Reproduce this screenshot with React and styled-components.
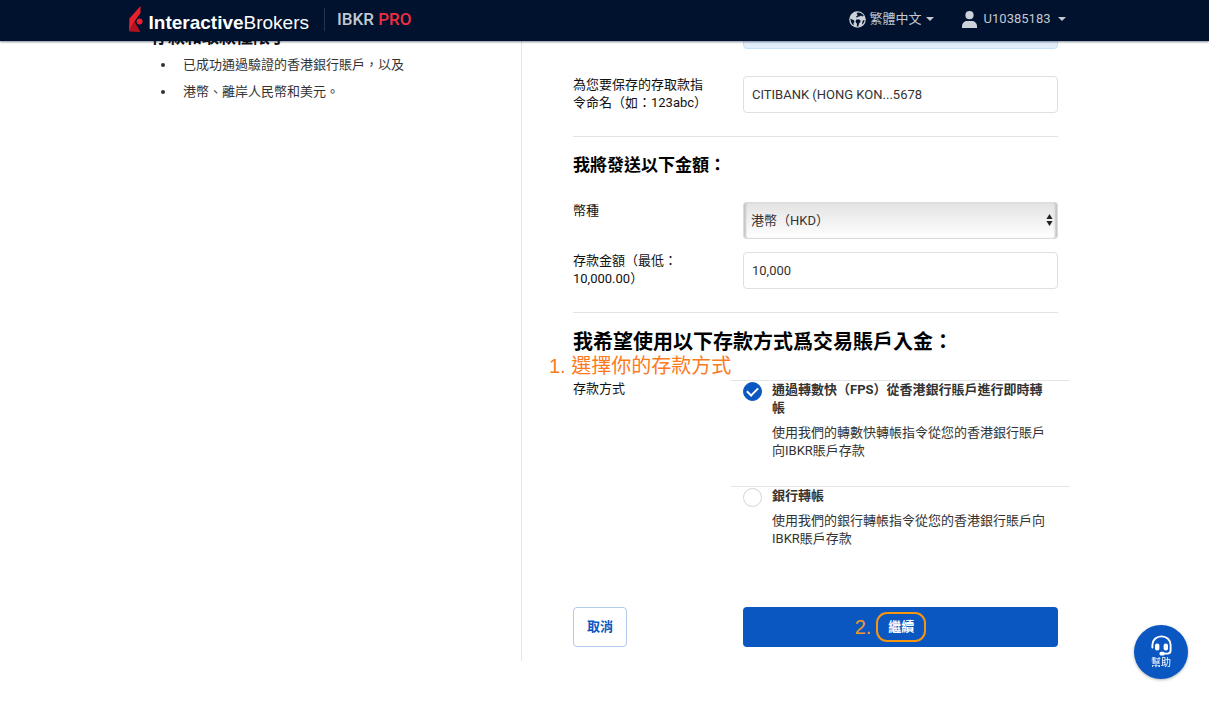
import React, { useState } from "react";
import styled, { createGlobalStyle } from "styled-components";

const depositMethods = [
  {
    id: "fps",
    title: "通過轉數快（FPS）從香港銀行賬戶進行即時轉帳",
    text: "使用我們的轉數快轉帳指令從您的香港銀行賬戶向IBKR賬戶存款",
  },
  {
    id: "bank",
    title: "銀行轉帳",
    text: "使用我們的銀行轉帳指令從您的香港銀行賬戶向IBKR賬戶存款",
  },
];

const Logo = () => (
  <svg width="14" height="26" viewBox="0 0 14 26" aria-hidden="true">
    <path d="M11.5 0 L0.4 12.6 L0 25.5 L5.4 15.6 L11.5 7 Z" fill="#e8202c" />
    <path d="M0 25.5 L5.4 15.2 L11.4 26 Z" fill="#b3121d" />
    <circle cx="10.6" cy="15.6" r="3" fill="#e8202c" />
  </svg>
);

const Globe = () => (
  <svg width="17" height="17" viewBox="0 0 17 17" aria-hidden="true">
    <circle cx="8.5" cy="8.5" r="8.3" fill="#cdd2da" />
    <path d="M8.6 1.4 C11.4 1.3 13.6 2.7 14.8 4.8 L13.4 5.6 L12 4.4 L10.8 5.6 L9.2 5.4 L8 6.8 L7 5.4 L8.8 4.2 L7.6 2.8 Z" fill="#00122d" />
    <path d="M1.5 7.6 L3 8.6 L5 9.2 L5.4 11 L4.4 12.6 L4.8 14.6 C2.6 13 1.4 10.6 1.5 7.6 Z" fill="#00122d" />
    <path d="M7 8.8 L9.6 8.2 L11.6 9.4 L11.4 11 L10 12.4 L9.4 15.4 L7.8 15.4 L8 12.8 L6.6 11 Z" fill="#00122d" />
    <path d="M15.5 9 L13.8 9.6 L12.8 13.6 C14.4 12.6 15.4 11 15.5 9 Z" fill="#00122d" />
  </svg>
);

const Person = () => (
  <svg width="15" height="17" viewBox="0 0 15 17" aria-hidden="true">
    <circle cx="7.5" cy="4.2" r="4.1" fill="#cdd2da" />
    <path d="M0 17 V15.4 C0 12 2.6 10 5.2 10 H9.8 C12.4 10 15 12 15 15.4 V17 Z" fill="#cdd2da" />
  </svg>
);

const Headset = () => (
  <svg width="21" height="21" viewBox="0 0 21 21" fill="none" aria-hidden="true">
    <path d="M1.4 12.5 V10 C1.4 4.8 5.4 1.4 10.5 1.4 C15.6 1.4 19.6 4.8 19.6 10 V15.5 C19.6 17.5 18.4 18.6 16.4 18.6 H11" stroke="#fff" strokeWidth="1.9" strokeLinecap="round" />
    <rect x="4" y="8.4" width="4.4" height="7" rx="2" fill="#fff" />
    <rect x="12.6" y="8.4" width="4.4" height="7" rx="2" fill="#fff" />
    <rect x="8.4" y="16.8" width="5.4" height="3.8" rx="1.9" fill="#fff" />
  </svg>
);

const App = () => {
  const [name, setName] = useState("CITIBANK (HONG KON...5678");
  const [amount, setAmount] = useState("10,000");
  const [method, setMethod] = useState("fps");

  return (
    <>
      <GlobalStyle />
      <Header>
        <HeaderInner>
          <Brand href="#">
            <Logo />
            <BrandName>
              <b>Interactive</b>Brokers
            </BrandName>
          </Brand>
          <Plan>
            IBKR <span>PRO</span>
          </Plan>
          <Menu>
            <MenuButton type="button">
              <Globe />
              繁體中文
              <Caret />
            </MenuButton>
            <MenuButton type="button" $wide>
              <Person />
              U10385183
              <Caret />
            </MenuButton>
          </Menu>
        </HeaderInner>
      </Header>

      <Page>
        <Aside>
          <AsideTitle>存款和取款僅限于</AsideTitle>
          <List>
            <li>已成功通過驗證的香港銀行賬戶，以及</li>
            <li>港幣、離岸人民幣和美元。</li>
          </List>
        </Aside>

        <Form onSubmit={(e) => e.preventDefault()}>
          <Row>
            <Notice />
          </Row>
          <Row>
            <Label htmlFor="name">為您要保存的存取款指令命名（如：123abc）</Label>
            <Input id="name" value={name} onChange={(e) => setName(e.target.value)} />
          </Row>
          <Rule />
          <Heading>我將發送以下金額：</Heading>
          <Fields>
            <Row>
              <Label htmlFor="currency">幣種</Label>
              <SelectWrap>
                <Select id="currency" defaultValue="HKD">
                  <option value="HKD">港幣（HKD）</option>
                  <option value="USD">美元（USD）</option>
                </Select>
                <svg width="7" height="12" viewBox="0 0 7 12" aria-hidden="true">
                  <path d="M3.5 0 L6.6 5 H0.4 Z M3.5 12 L6.6 7 H0.4 Z" fill="#222" />
                </svg>
              </SelectWrap>
            </Row>
            <Row>
              <Label htmlFor="amount">存款金額（最低：10,000.00）</Label>
              <Input id="amount" value={amount} onChange={(e) => setAmount(e.target.value)} />
            </Row>
          </Fields>
          <Rule />
          <Heading $large>我希望使用以下存款方式爲交易賬戶入金：</Heading>
          <StepNote>1. 選擇你的存款方式</StepNote>
          <Row>
            <Label as="span" id="method">存款方式</Label>
            <Methods role="radiogroup" aria-labelledby="method">
              {depositMethods.map((item) => (
                <Method key={item.id}>
                  <Radio
                    id={item.id}
                    name="method"
                    checked={method === item.id}
                    onChange={() => setMethod(item.id)}
                  />
                  <MethodLabel htmlFor={item.id}>
                    <b>{item.title}</b>
                    <span>{item.text}</span>
                  </MethodLabel>
                </Method>
              ))}
            </Methods>
          </Row>
          <Actions>
            <Cancel type="button">取消</Cancel>
            <Submit type="submit">
              <Step>2.</Step>
              <Ring>繼續</Ring>
            </Submit>
          </Actions>
        </Form>
      </Page>

      <Help type="button">
        <Headset />
        幫助
      </Help>
    </>
  );
};

const GlobalStyle = createGlobalStyle`
  * {
    box-sizing: border-box;
  }
  body {
    margin: 0;
    background: #fff;
    color: #111;
    font-family: Roboto, "Noto Sans CJK TC", sans-serif;
    font-size: 13px;
    line-height: 18px;
  }
  button, input, select {
    font: inherit;
  }
`;

const Header = styled.header`
  position: sticky;
  top: 0;
  z-index: 10;
  height: 41px;
  background: #00122d;
  box-shadow: 0 1px 2px rgba(0, 18, 45, 0.5);
`;

const HeaderInner = styled.div`
  display: flex;
  align-items: center;
  max-width: 952px;
  height: 38px;
  margin: 0 auto;
  padding-right: 15px;
`;

const Brand = styled.a`
  display: flex;
  align-items: center;
  gap: 6px;
  color: #fff;
  text-decoration: none;
`;

const BrandName = styled.span`
  padding-top: 8px;
  font-family: "Liberation Sans", Arial, sans-serif;
  font-size: 19px;
  line-height: 24px;
`;

const Plan = styled.div`
  margin-left: 15px;
  padding-left: 12px;
  border-left: 1px solid #26344b;
  color: #c3c8d1;
  font-size: 17px;
  font-weight: 500;
  line-height: 23px;
  span {
    color: #ee2d42;
  }
`;

const Menu = styled.nav`
  display: flex;
  gap: 28px;
  margin-left: auto;
`;

const MenuButton = styled.button`
  display: flex;
  align-items: center;
  gap: ${({ $wide }) => ($wide ? "7px" : "4px")};
  padding: 0;
  border: 0;
  background: none;
  color: #c3c8d1;
  cursor: pointer;
`;

const Caret = styled.i`
  border: 4px solid transparent;
  border-top-color: currentColor;
  border-bottom: 0;
`;

const Page = styled.main`
  display: grid;
  grid-template-columns: 371px 1fr;
  max-width: 907px;
  margin: -14px auto 58px;
`;

const Aside = styled.aside`
  padding-right: 20px;
  border-right: 1px solid #e4e5e7;
`;

const AsideTitle = styled.h3`
  margin: 0;
  font-size: 17px;
  line-height: 20px;
`;

const List = styled.ul`
  margin: 4px 0 0;
  padding-left: 10px;
  list-style: none;
  color: #333;
  line-height: 27px;
  li {
    display: flex;
    align-items: center;
    gap: 18px;
  }
  li::before {
    content: "";
    width: 4px;
    height: 4px;
    border-radius: 50%;
    background: #333;
  }
`;

const Form = styled.form`
  padding: 0 0 14px 51px;
`;

const Row = styled.div`
  display: grid;
  grid-template-columns: 4fr 9fr;
  column-gap: 30px;
`;

const Notice = styled.div`
  grid-column: 2;
  height: 22px;
  margin-bottom: 27px;
  border: 1px solid #c5e2f8;
  border-radius: 4px;
  background: #e2eefa;
`;

const Label = styled.label`
  color: #111;
`;

const Input = styled.input`
  width: 100%;
  height: 37px;
  padding: 0 8px;
  border: 1px solid #dfe0e2;
  border-radius: 4px;
  color: #333;
`;

const Rule = styled.hr`
  margin: 23px 0 0;
  border: 0;
  border-top: 1px solid #e2e3e5;
`;

const Heading = styled.h3`
  margin: ${({ $large }) => ($large ? "17px 0 0" : "16px 0 25px")};
  color: #000;
  font-size: ${({ $large }) => ($large ? "20px" : "17px")};
  line-height: 24px;
`;

const Fields = styled.div`
  display: grid;
  gap: 13px;
`;

const SelectWrap = styled.div`
  position: relative;
  svg {
    position: absolute;
    top: 12px;
    right: 5px;
    pointer-events: none;
  }
`;

const Select = styled.select`
  width: 100%;
  height: 37px;
  padding: 0 7px;
  appearance: none;
  border: 1px solid #dcdcdc;
  border-radius: 3px;
  background: linear-gradient(#e3e3e3, #fff);
  box-shadow: inset 3px 0 2px -1px #c4c4c4, inset -3px 0 2px -1px #c4c4c4;
  color: #333;
`;

const StepNote = styled.p`
  margin: 0 0 2px -24px;
  color: #fb7a1e;
  font-family: "Liberation Sans", "Noto Sans CJK TC", sans-serif;
  font-size: 20px;
  line-height: 24px;
`;

const Methods = styled.div`
  margin: 0 -12px;
`;

const Method = styled.div`
  display: flex;
  gap: 10px;
  padding: 0 20px 26px 12px;
  border-top: 1px solid #e4e5e7;
`;

const Radio = styled.input.attrs({ type: "radio" })`
  flex: none;
  width: 19px;
  height: 19px;
  margin: 1px 0 0;
  appearance: none;
  border: 1px solid #d3d4d6;
  border-radius: 50%;
  background: #fff;
  &:checked {
    display: grid;
    place-items: center;
    border-color: #0b57c2;
    background: #0b57c2;
  }
  &:checked::before {
    content: "";
    width: 9px;
    height: 5px;
    margin-bottom: 2px;
    border: solid #fff;
    border-width: 0 0 2px 2px;
    transform: rotate(-45deg);
  }
`;

const MethodLabel = styled.label`
  display: grid;
  gap: 7px;
  color: #333;
`;

const Actions = styled(Row)`
  margin-top: 33px;
`;

const Button = styled.button`
  height: 40px;
  border-radius: 4px;
  font-weight: 700;
  cursor: pointer;
`;

const Cancel = styled(Button)`
  justify-self: start;
  padding: 0 13px;
  border: 1px solid #b3caec;
  background: #fff;
  color: #0b57c2;
`;

const Submit = styled(Button)`
  display: flex;
  align-items: center;
  justify-content: center;
  gap: 5px;
  padding: 0 20px 0 0;
  border: 0;
  background: #0b57c2;
  color: #fff;
`;

const Step = styled.span`
  color: #f39a1f;
  font-family: "Liberation Sans", Arial, sans-serif;
  font-size: 20px;
  font-weight: 400;
`;

const Ring = styled.span`
  padding: 4px 10px;
  border: 2px solid #f8950e;
  border-radius: 11px;
`;

const Help = styled.button`
  position: fixed;
  right: 21px;
  bottom: 41px;
  display: flex;
  flex-direction: column;
  align-items: center;
  justify-content: center;
  width: 54px;
  height: 54px;
  padding: 1px 0 0;
  border: 0;
  border-radius: 50%;
  background: #0b57c2;
  box-shadow: 0 1px 3px rgba(0, 0, 0, 0.3);
  color: #fff;
  font-size: 10px;
  line-height: 14px;
  cursor: pointer;
`;

export default App;
